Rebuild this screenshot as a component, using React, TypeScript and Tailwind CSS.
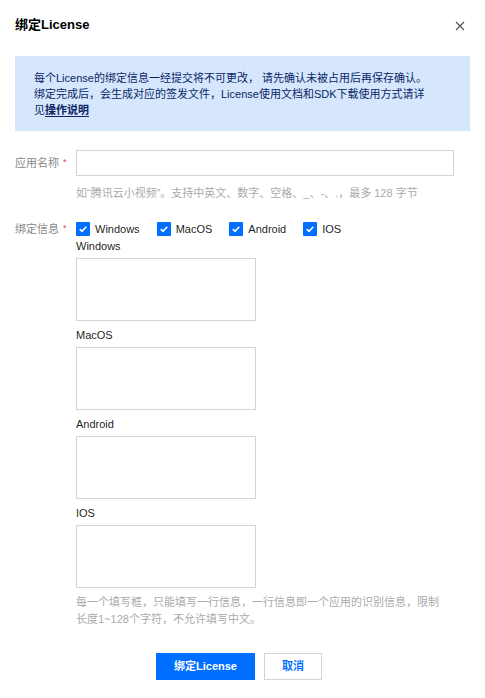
import React from "react";

const font = {
  fontFamily: '"Liberation Sans", "Noto Sans CJK SC", sans-serif',
};

function Check({ label }: { label: string }) {
  return (
    <label className="flex items-center gap-[5px] mr-[17px]">
      <span className="w-[14px] h-[14px] bg-[#006eff] flex items-center justify-center rounded-[1px]">
        <svg width="10" height="10" viewBox="0 0 10 10" fill="none">
          <path d="M1.8 5.2 L4 7.3 L8.3 2.8" stroke="white" strokeWidth="1.6" />
        </svg>
      </span>
      <span className="text-[11px] text-[#000000e6]">{label}</span>
    </label>
  );
}

function Block({ name }: { name: string }) {
  return (
    <div className="flex flex-col">
      <div className="h-[18px] leading-[18px] text-[11px] text-[#000000e6] mt-[1px]">{name}</div>
      <textarea className="mt-[3px] w-[180px] h-[63px] border border-[#cfd5de] resize-none outline-none" />
    </div>
  );
}

export default function App() {
  return (
    <div className="w-[485px] h-[698px] bg-white relative" style={font}>
      <div className="flex items-center justify-between pl-[15px] pr-[20px] pt-[17px]">
        <h2 className="text-[13px] font-bold text-black leading-[16px]">绑定License</h2>
        <svg width="10" height="10" viewBox="0 0 10 10" className="mt-[2px]">
          <path d="M1 1 L9 9 M9 1 L1 9" stroke="#555" strokeWidth="1.2" />
        </svg>
      </div>

      <div className="mx-[15px] mt-[23px] bg-[#d5e6fd] pl-[19px] pr-[10px] pt-[14px] pb-[13px] text-[11px] leading-[16px] text-[#0b2766] whitespace-nowrap">
        每个License的绑定信息一经提交将不可更改， 请先确认未被占用后再保存确认。
        <br />
        绑定完成后，会生成对应的签发文件，License使用文档和SDK下载使用方式请详
        <br />
        见<a className="font-bold underline underline-offset-2">操作说明</a>
      </div>

      <div className="flex mt-[19px] pl-[15px]">
        <div className="w-[61px] h-[26px] flex items-center text-[11px] text-[#888]">
          应用名称<span className="text-[#e54545] ml-[4px] text-[9px]">*</span>
        </div>
        <div className="flex flex-col">
          <input className="w-[378px] h-[26px] border border-[#cfd5de] outline-none" />
          <div className="mt-[9px] text-[11px] leading-[16px] text-[#aaa]">
            如“腾讯云小视频”。支持中英文、数字、空格、_、-、.，最多 128 字节
          </div>
        </div>
      </div>

      <div className="flex mt-[21px] pl-[15px]">
        <div className="w-[61px] h-[14px] flex items-center text-[11px] text-[#888]">
          绑定信息<span className="text-[#e54545] ml-[4px] text-[9px]">*</span>
        </div>
        <div className="flex flex-col">
          <div className="flex items-center h-[14px]">
            <Check label="Windows" />
            <Check label="MacOS" />
            <Check label="Android" />
            <Check label="IOS" />
          </div>
          <div className="flex flex-col gap-[4px]">
            <Block name="Windows" />
            <Block name="MacOS" />
            <Block name="Android" />
            <Block name="IOS" />
          </div>
          <div className="mt-[6px] text-[11px] leading-[17px] text-[#aaa] whitespace-nowrap">
            每一个填写框，只能填写一行信息，一行信息即一个应用的识别信息，限制
            <br />
            长度1~128个字符，不允许填写中文。
          </div>
        </div>
      </div>

      <div className="flex gap-[9px] mt-[25px] pl-[156px]">
        <button className="w-[99px] h-[27px] bg-[#006eff] text-white text-[11px] font-bold">
          绑定License
        </button>
        <button className="w-[58px] h-[27px] border border-[#cfd5de] text-[#006eff] text-[11px] font-bold">
          取消
        </button>
      </div>
    </div>
  );
}
